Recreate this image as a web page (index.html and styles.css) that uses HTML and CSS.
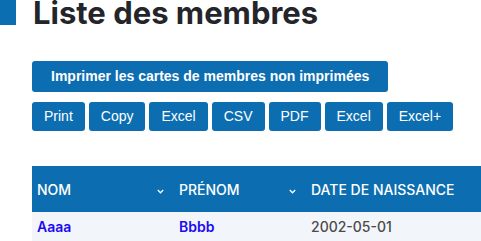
FILE: index.html
```html
<!DOCTYPE html>
<html lang="fr">
<head>
<meta charset="utf-8">
<title>Liste des membres</title>
<link rel="stylesheet" href="styles.css">
</head>
<body>
<header class="page-title">
  <span class="title-bar"></span>
  <h1>Liste des membres</h1>
</header>
<main class="content">
  <div class="actions">
    <button class="btn btn-wide">Imprimer les cartes de membres non imprimées</button>
  </div>
  <div class="export">
    <button class="btn">Print</button>
    <button class="btn">Copy</button>
    <button class="btn">Excel</button>
    <button class="btn">CSV</button>
    <button class="btn">PDF</button>
    <button class="btn">Excel</button>
    <button class="btn">Excel+</button>
  </div>
  <div class="table-wrap">
    <table class="members">
      <colgroup>
        <col class="c-nom">
        <col class="c-prenom">
        <col class="c-date">
      </colgroup>
      <thead>
        <tr>
          <th><div class="th-in"><span>Nom</span><svg class="chev" width="7" height="5" viewBox="0 0 7 5"><polyline points="0.8,1 3.5,3.8 6.2,1" fill="none" stroke="currentColor" stroke-width="1.3"/></svg></div></th>
          <th><div class="th-in"><span>Prénom</span><svg class="chev" width="7" height="5" viewBox="0 0 7 5"><polyline points="0.8,1 3.5,3.8 6.2,1" fill="none" stroke="currentColor" stroke-width="1.3"/></svg></div></th>
          <th><div class="th-in"><span>Date de naissance</span></div></th>
        </tr>
      </thead>
      <tbody>
        <tr>
          <td><a href="#">Aaaa</a></td>
          <td><a href="#">Bbbb</a></td>
          <td class="date">2002-05-01</td>
        </tr>
      </tbody>
    </table>
  </div>
</main>
</body>
</html>
```
FILE: styles.css
```css
html, body {
  margin: 0;
  padding: 0;
  overflow: hidden;
  background: #ffffff;
}
body {
  font-family: Inter, "Noto Sans", sans-serif;
  color: #222;
}
.page-title {
  display: flex;
  align-items: flex-start;
  gap: 17px;
  margin-top: -5px;
}
.title-bar {
  width: 16px;
  height: 30px;
  background: #0b6eb0;
  flex: none;
}
.page-title h1 {
  margin: 0;
  font-family: Inter, sans-serif;
  font-weight: 700;
  font-size: 31px;
  line-height: 36px;
  color: #23252b;
}
.content {
  padding: 30px 0 0 32px;
}
.btn {
  font-family: "Liberation Sans", Arial, sans-serif;
  font-size: 14px;
  line-height: 17px;
  color: #ffffff;
  background: #0c6eb1;
  border: none;
  border-radius: 3px;
  padding: 6px 12px;
  margin: 0;
  cursor: pointer;
}
.btn-wide {
  font-weight: 700;
  padding: 7px 19px;
}
.export {
  display: flex;
  gap: 4px;
  margin-top: 10px;
}
.table-wrap {
  margin-top: 35px;
  width: 640px;
}
.members {
  border-collapse: collapse;
  table-layout: fixed;
  width: 640px;
}
.c-nom { width: 142px; }
.c-prenom { width: 132px; }
.members th {
  background: #0c6eb0;
  color: #ffffff;
  height: 46px;
  padding: 0 10px 0 5px;
  text-align: left;
  font-size: 14px;
  font-weight: 500;
  text-transform: uppercase;
}
.th-in {
  display: flex;
  justify-content: space-between;
  align-items: center;
}
.chev {
  margin-top: 5px;
}
.members td {
  padding: 6px 5px;
  line-height: 18px;
  font-size: 14px;
  background: #f2f6fa;
}
.members a {
  color: #1c0cf0;
  text-decoration: none;
  font-weight: 600;
}
.members .date {
  color: #4a4a4a;
  font-weight: 500;
}
```
